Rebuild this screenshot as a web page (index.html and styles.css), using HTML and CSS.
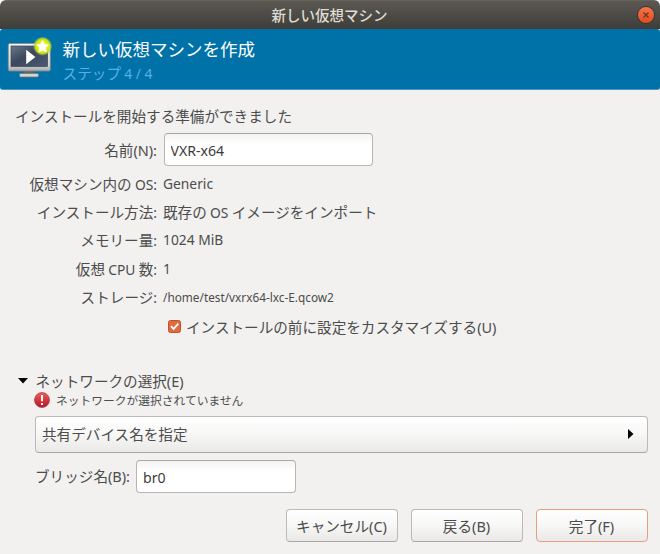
FILE: index.html
```
<!DOCTYPE html>
<html lang="ja">
<head>
<meta charset="utf-8">
<title>新しい仮想マシン</title>
<link rel="stylesheet" href="styles.css">
</head>
<body>
<div class="window">
  <header class="titlebar">
    <h1>新しい仮想マシン</h1>
    <button class="close" aria-label="閉じる"><svg width="16" height="16" viewBox="0 0 16 16"><path d="M5.5 5.5l5 5M10.5 5.5l-5 5" stroke="#713621" stroke-width="1.4"/></svg></button>
  </header>
  <section class="banner">
    <svg class="vm-icon" width="48" height="48" viewBox="0 0 48 48">
      <defs>
        <linearGradient id="frame" x1="0" y1="0" x2="0" y2="1"><stop offset="0" stop-color="#f4f4f2"/><stop offset=".8" stop-color="#d4d4d3"/><stop offset="1" stop-color="#a5a5a5"/></linearGradient>
        <linearGradient id="screen" x1="0" y1="0" x2="1" y2="1"><stop offset="0" stop-color="#69798a"/><stop offset=".45" stop-color="#3b485b"/><stop offset="1" stop-color="#4b5a75"/></linearGradient>
        <radialGradient id="glow"><stop offset=".5" stop-color="#e6f20a"/><stop offset=".75" stop-color="#cfe01c" stop-opacity=".95"/><stop offset="1" stop-color="#8ac34b" stop-opacity="0"/></radialGradient>
      </defs>
      <path d="M18 35h10v4H18z" fill="#5d6468"/>
      <rect x="13.5" y="37.5" width="19" height="3.5" rx="1.3" fill="#d5d5d3" stroke="#777" stroke-width=".8"/>
      <rect x="2.3" y="7.5" width="42" height="27.5" rx="1.5" fill="url(#frame)" stroke="#858b8e" stroke-width=".8"/>
      <rect x="5" y="10" width="36.5" height="20.5" fill="url(#screen)" stroke="#35445a" stroke-width=".7"/>
      <path d="M20.2 13.7v14.6l9.2-7.3z" fill="#fff"/>
      <circle cx="36.6" cy="10.2" r="9.8" fill="url(#glow)"/>
      <path d="M36.6 4.6l1.8 3.7 4 .6-2.9 2.9.7 4.1-3.6-1.9-3.6 1.9.7-4.1-2.9-2.9 4-.6z" fill="#fff" stroke="#fff" stroke-width=".8" stroke-linejoin="round"/>
    </svg>
    <div class="heading">
      <h2>新しい仮想マシンを作成</h2>
      <p>ステップ <span class="lat">4 / 4</span></p>
    </div>
  </section>
  <main>
    <p class="ready">インストールを開始する準備ができました</p>
    <div class="summary">
      <label class="name-label" for="name">名前<span class="lat mnemonic">(N):</span></label>
      <input id="name" class="entry name-entry" value="VXR-x64">
      <span class="key">仮想マシン内の <span class="lat">OS:</span></span><span class="lat">Generic</span>
      <span class="key">インストール方法<span class="lat">:</span></span><span>既存の <span class="lat">OS</span> イメージをインポート</span>
      <span class="key">メモリー量<span class="lat">:</span></span><span class="lat">1024 MiB</span>
      <span class="key">仮想 <span class="lat">CPU</span> 数<span class="lat">:</span></span><span class="lat">1</span>
      <span class="key">ストレージ<span class="lat">:</span></span><span class="lat path">/home/test/vxrx64-lxc-E.qcow2</span>
    </div>
    <div class="customize">
      <svg width="13" height="13" viewBox="0 0 13 13"><rect x=".5" y=".5" width="12" height="12" rx="2" fill="#df6b3f" stroke="#b9532e"/><path d="M3 6.2l2.6 2.7 4.7-5.2" fill="none" stroke="#fff" stroke-width="1.8"/></svg>
      <span>インストールの前に設定をカスタマイズする<span class="lat mnemonic">(U)</span></span>
    </div>
    <div class="expander">
      <svg width="10" height="6" viewBox="0 0 10 6"><path d="M0 0h10L5 5.5z" fill="#000"/></svg>
      <span>ネットワークの選択<span class="lat mnemonic">(E)</span></span>
    </div>
    <div class="warning">
      <svg width="16" height="16" viewBox="0 0 16 16"><defs><linearGradient id="err" x1="0" y1="0" x2="0" y2="1"><stop offset="0" stop-color="#e6655b"/><stop offset=".5" stop-color="#d4363b"/><stop offset="1" stop-color="#a91c33"/></linearGradient></defs><circle cx="8" cy="8" r="7.5" fill="url(#err)" stroke="#b4343a" stroke-width=".7"/><path d="M8 3v6.2M8 11v2" stroke="#fff" stroke-width="1.9"/></svg>
      <span>ネットワークが選択されていません</span>
    </div>
    <div class="combo">
      <span>共有デバイス名を指定</span>
      <svg width="6" height="10" viewBox="0 0 6 10"><path d="M0 0v10l5.5-5z" fill="#000"/></svg>
    </div>
    <div class="bridge">
      <label for="bridge">ブリッジ名<span class="lat mnemonic">(B):</span></label>
      <input id="bridge" class="entry bridge-entry" value="br0">
    </div>
    <div class="actions">
      <button class="btn">キャンセル<span class="lat mnemonic">(C)</span></button>
      <button class="btn">戻る<span class="lat mnemonic">(B)</span></button>
      <button class="btn suggested">完了<span class="lat mnemonic">(F)</span></button>
    </div>
  </main>
</div>
</body>
</html>
```
FILE: styles.css
```
* { box-sizing: border-box; }
body {
  margin: 0;
  background: #fff;
  color: #4c4c4c;
  font: 14.6px/28px "Noto Sans CJK JP", sans-serif;
}
h1, h2, p { margin: 0; }
.window {
  width: 660px;
  height: 554px;
  overflow: hidden;
  background: #f2f1f0;
  border-radius: 6px 6px 0 0;
  white-space: nowrap;
}
.lat { font-family: "Noto Sans", sans-serif; font-size: 13.8px; }
.lat.mnemonic { font-size: 14.5px; }
.titlebar {
  height: 29px;
  display: grid;
  grid-template-columns: 1fr auto 1fr;
  align-items: center;
  padding-right: 6px;
  background: linear-gradient(#5c5953, #3e3d39);
  border-top: 1px solid #66635b;
}
.titlebar h1 {
  grid-column: 2;
  margin-left: 5px;
  font-size: 14.5px;
  font-weight: 500;
  line-height: 28px;
  color: #dfdbd2;
}
.close {
  justify-self: end;
  width: 16px;
  height: 16px;
  padding: 0;
  border: 0;
  border-radius: 50%;
  background: linear-gradient(#f4764e, #df4c1c);
  box-shadow: 0 0 0 1px #39332e;
}
.close svg { display: block; }
.banner {
  height: 61px;
  display: flex;
  padding-left: 6px;
  background: #0072a8;
  border-bottom: 1px solid #4598c1;
  border-radius: 3px;
}
.vm-icon { margin-top: 7px; }
.heading { margin-left: 8.6px; padding-top: 7px; }
.heading h2 { font-size: 17.5px; font-weight: 400; line-height: 26px; color: #fff; }
.heading p { line-height: 22px; color: #59afe0; }
.ready { margin: 12px 0 0 15px; }
.summary {
  display: grid;
  grid-template-columns: 157px 1fr;
  column-gap: 6px;
  grid-template-rows: 33px;
  grid-auto-rows: 28.2px;
  margin-top: 3px;
}
.key, .name-label { text-align: right; }
.name-label { line-height: 34px; }
.entry {
  height: 33px;
  padding: 2px 6px 0;
  border: 1px solid #b8b6b3;
  border-top-color: #a9a7a4;
  border-radius: 4px;
  background: linear-gradient(#f3f3f3, #fff 10px);
  color: #3c3c3c;
  font: 14.1px "Noto Sans", sans-serif;
}
.name-entry { width: 209px; margin-left: .5px; }
.key, .key + span { position: relative; top: 4px; }
.path { font-size: 11.8px; }
.customize {
  display: flex;
  align-items: center;
  gap: 5px;
  margin: 6px 0 0 168px;
  height: 28px;
}
.expander {
  display: flex;
  align-items: center;
  gap: 8px;
  margin: 26px 0 0 17.5px;
  height: 28px;
}
.warning {
  display: flex;
  align-items: center;
  gap: 6px;
  height: 16px;
  margin: -3px 0 0 34px;
  font-size: 11.75px;
}
.combo, .btn {
  border: 1px solid #bcb9b6;
  border-bottom-color: #a9a6a3;
  border-radius: 4px;
  background: linear-gradient(#fff, #f8f8f7 45%, #eae9e7);
}
.combo {
  display: flex;
  align-items: center;
  justify-content: space-between;
  width: 612.5px;
  height: 37px;
  margin: 8px 0 0 35px;
  padding: 0 13px 0 6px;
}
.bridge {
  display: flex;
  align-items: center;
  justify-content: space-between;
  width: 261px;
  margin: 7px 0 0 35px;
}
.bridge-entry { width: 160px; }
.actions {
  display: flex;
  justify-content: flex-end;
  gap: 13px;
  margin: 16px 12.5px 0 0;
}
.btn {
  width: 112px;
  height: 33px;
  padding: 0;
  color: #4c4c4c;
  font: 14.6px/31px "Noto Sans CJK JP", sans-serif;
}
.suggested { border-color: #e59e82; }
```
